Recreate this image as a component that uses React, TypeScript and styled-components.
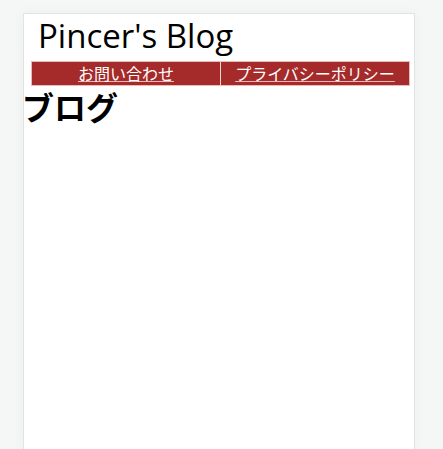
import styled, { createGlobalStyle } from "styled-components";

const GlobalStyle = createGlobalStyle`
  html, body {
    margin: 0;
    padding: 0;
    background: #f5f7f7;
    font-family: "Open Sans", "Noto Sans CJK JP", sans-serif;
  }
`;

const Page = styled.div`
  padding: 13px 0 0 23px;
  min-height: 449px;
  box-sizing: border-box;
`;

const Container = styled.div`
  width: 390px;
  min-height: 436px;
  background: #ffffff;
  border: 1px solid #e2e4e4;
  border-bottom: none;
  box-shadow: 0 0 12px rgba(0, 0, 0, 0.04);
`;

const SiteTitle = styled.div`
  font-size: 33px;
  line-height: 44px;
  padding: 0 0 3px 14px;
  color: #000;
  font-family: "Open Sans", "Noto Sans CJK JP", sans-serif;
`;

const Nav = styled.nav`
  display: flex;
  margin-left: 7px;
  width: 379px;
  height: 25px;
  background: #a52a2a;
  border: 1px solid #e6bcbc;
  box-sizing: border-box;
`;

const NavItem = styled.a<{ $divider?: boolean }>`
  flex: 1;
  text-align: center;
  color: #ffffff;
  font-size: 16px;
  line-height: 22px;
  text-decoration: underline;
  text-decoration-color: #e8b8b8;
  font-family: "Noto Sans CJK JP", sans-serif;
  border-left: ${(p) => (p.$divider ? "1px solid #f0d8d8" : "none")};
`;

const Heading = styled.h1`
  margin: 0 0 0 -2px;
  font-size: 32px;
  line-height: 40px;
  font-weight: 700;
  font-family: "Noto Sans CJK JP", sans-serif;
`;

export default function App() {
  return (
    <>
      <GlobalStyle />
      <Page>
        <Container>
          <SiteTitle>Pincer's Blog</SiteTitle>
          <Nav>
            <NavItem href="#">お問い合わせ</NavItem>
            <NavItem href="#" $divider>
              プライバシーポリシー
            </NavItem>
          </Nav>
          <Heading>ブログ</Heading>
        </Container>
      </Page>
    </>
  );
}
